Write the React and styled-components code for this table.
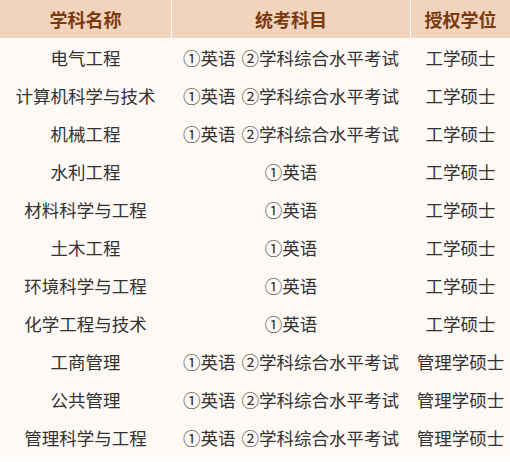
import React from "react";
import styled, { createGlobalStyle } from "styled-components";

const GlobalStyle = createGlobalStyle`
    body {
        margin: 0;
        background: #fef9f5;
        font-family: "Noto Sans CJK SC", "Noto Sans", sans-serif;
    }
`;

const rows = [
    { name: "电气工程", exam: "①英语 ②学科综合水平考试", degree: "工学硕士" },
    { name: "计算机科学与技术", exam: "①英语 ②学科综合水平考试", degree: "工学硕士" },
    { name: "机械工程", exam: "①英语 ②学科综合水平考试", degree: "工学硕士" },
    { name: "水利工程", exam: "①英语", degree: "工学硕士" },
    { name: "材料科学与工程", exam: "①英语", degree: "工学硕士" },
    { name: "土木工程", exam: "①英语", degree: "工学硕士" },
    { name: "环境科学与工程", exam: "①英语", degree: "工学硕士" },
    { name: "化学工程与技术", exam: "①英语", degree: "工学硕士" },
    { name: "工商管理", exam: "①英语 ②学科综合水平考试", degree: "管理学硕士" },
    { name: "公共管理", exam: "①英语 ②学科综合水平考试", degree: "管理学硕士" },
    { name: "管理科学与工程", exam: "①英语 ②学科综合水平考试", degree: "管理学硕士" },
];

const StyledTable = styled.div`
    width: 510px;
    height: 462px;
    overflow: hidden;
    display: grid;
    grid-template-columns: 171px 238px 99px;
    grid-auto-rows: 37px;
    grid-template-rows: 38px;
    gap: 1px;
    background: #fffdfb;
`;

const Cell = styled.div`
    display: flex;
    align-items: center;
    justify-content: center;
    white-space: nowrap;
    background: ${({ head }) => (head ? "#f2d3bb" : "#fef9f5")};
    color: ${({ head }) => (head ? "#7a3b12" : "#333333")};
    font-size: ${({ head }) => (head ? "18px" : "17.5px")};
    font-weight: ${({ head }) => (head ? 700 : 400)};
    word-spacing: ${({ head }) => (head ? "0" : "2px")};
`;

const App = () => {
    return (
        <>
            <GlobalStyle />
            <StyledTable>
                <Cell head>学科名称</Cell>
                <Cell head>统考科目</Cell>
                <Cell head>授权学位</Cell>
                {rows.map((row) => (
                    <React.Fragment key={row.name}>
                        <Cell>{row.name}</Cell>
                        <Cell>{row.exam}</Cell>
                        <Cell>{row.degree}</Cell>
                    </React.Fragment>
                ))}
            </StyledTable>
        </>
    );
};
export default App;
